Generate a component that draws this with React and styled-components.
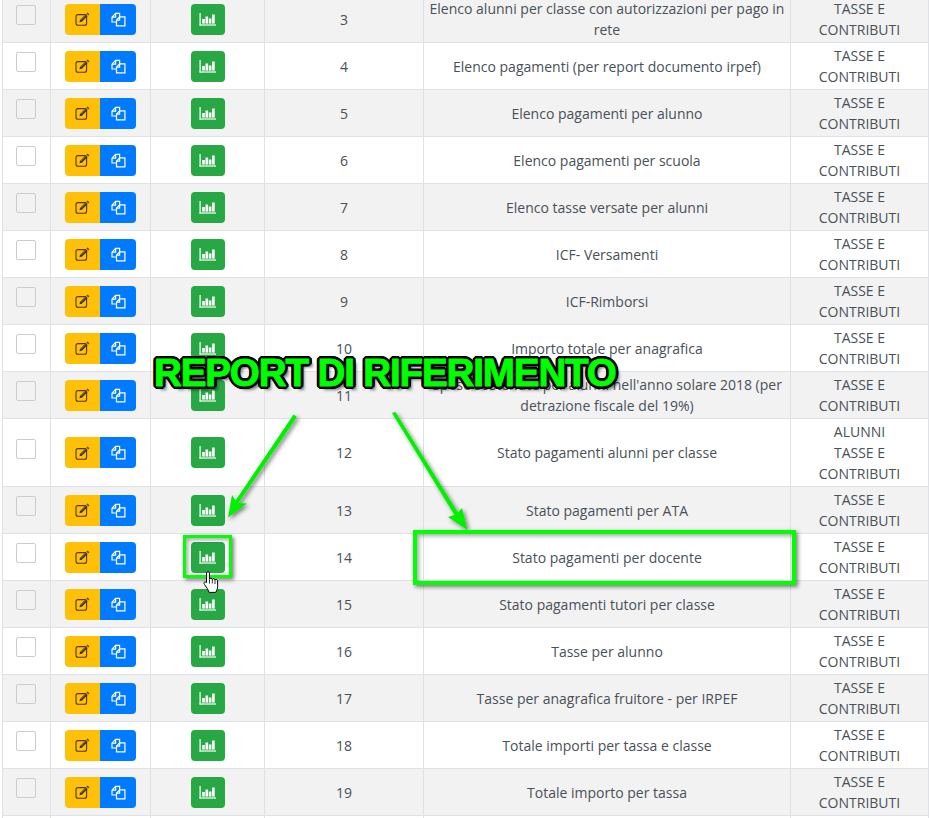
import React from "react";
import styled, { createGlobalStyle } from "styled-components";

const Global = createGlobalStyle`
  html, body { margin: 0; padding: 0; background: #fff; }
  body { font-family: "Open Sans", "Liberation Sans", sans-serif; }
`;

const Viewport = styled.div`
  position: relative;
  width: 929px;
  height: 818px;
  overflow: hidden;
`;

const Table = styled.table`
  width: 927px;
  margin: -5px 0 0 2px;
  table-layout: fixed;
  border-collapse: collapse;
  font-size: 14px;
  line-height: 21px;
  color: #495057;
  text-align: center;
`;

const Row = styled.tr`
  background: ${(p) => (p.$striped ? "#f2f2f2" : "#fff")};
`;

const Cell = styled.td`
  border: 1px solid #dee2e6;
  padding: 2px 4px;
  height: 42px;
  vertical-align: middle;
`;

const Checkbox = styled.span`
  display: block;
  box-sizing: border-box;
  width: 20px;
  height: 20px;
  margin: -8px 0 0 9px;
  background: ${(p) => (p.$striped ? "#f2f2f2" : "#fff")};
  border: 1px solid #ccc;
  border-radius: 2px;
`;

const ButtonGroup = styled.div`
  display: inline-flex;
  vertical-align: middle;
`;

const Button = styled.span`
  display: flex;
  align-items: center;
  justify-content: center;
  height: 31px;
  width: ${(p) => p.$w}px;
  background: ${(p) => p.$bg};
  border-radius: ${(p) => p.$radius};
`;

const Title = styled.div`
  padding: 0 1px;
`;

const Overlay = styled.svg`
  position: absolute;
  left: 0;
  top: 0;
  pointer-events: none;
`;

const Headline = styled.div`
  position: absolute;
  left: 154px;
  top: 349px;
  font-family: "Liberation Sans", Arial, sans-serif;
  font-weight: 700;
  font-size: 38.6px;
  letter-spacing: -1.15px;
  line-height: 48px;
  white-space: nowrap;
  color: #00ff00;
  -webkit-text-stroke: 0.9px #00ff00;
  text-shadow:
    -3px 0 0 #000, 3px 0 0 #000, 0 -3px 0 #000, 0 3px 0 #000,
    -2px -2px 0 #000, 2px -2px 0 #000, -2px 2px 0 #000, 2px 2px 0 #000,
    -3px -1px 0 #000, 3px -1px 0 #000, -3px 1px 0 #000, 3px 1px 0 #000,
    -1px -3px 0 #000, 1px -3px 0 #000, -1px 3px 0 #000, 1px 3px 0 #000,
    4px 4px 3px rgba(0, 0, 0, 0.5);
`;

const Marker = styled.div`
  position: absolute;
  box-sizing: border-box;
  left: ${(p) => p.$x}px;
  top: ${(p) => p.$y}px;
  width: ${(p) => p.$w}px;
  height: ${(p) => p.$h}px;
  border: ${(p) => p.$t}px solid #00ff00;
  box-shadow: 2px 2px 4px rgba(0, 0, 0, 0.5), inset 2px 2px 4px rgba(0, 0, 0, 0.35);
`;

const Cursor = styled.svg`
  position: absolute;
  left: 203px;
  top: 571px;
`;

const EditIcon = () => (
  <svg width="15" height="14" viewBox="0 0 15 14" fill="none">
    <rect x="1" y="2.600" width="10.600" height="10.600" rx="2" stroke="#5a3010" strokeWidth="1.100" />
    <path d="M5 8 10.800 2.200l1.800 1.800-5.800 5.800-2.300.5z" fill="#3a3320" />
    <path d="M6.200 8 11 3.200" stroke="#a88a20" strokeWidth="0.700" />
    <path d="M11.400 1.600 12.600.5l1.800 1.800-1.100 1.200z" fill="#6a4a10" />
  </svg>
);

const FilesIcon = () => (
  <svg width="15" height="15" viewBox="0 0 15 15" fill="none" stroke="#fff" strokeWidth="1.200">
    <path d="M5.500 10H1V5.200L4.600 1.300H8.600V4.800" />
    <path d="M4.600 1.300V5.200H1" />
    <path d="M8.600 4.800H13.900V13.900H5.500V8.200z" />
    <path d="M8.600 4.800V8.200H5.500" />
  </svg>
);

const ChartIcon = () => (
  <svg width="17" height="13" viewBox="0 0 17 13" fill="#fff">
    <rect x="0.500" y="0" width="1.200" height="12.500" />
    <rect x="0.500" y="11.400" width="16.500" height="1.200" />
    <rect x="3.200" y="6" width="2.600" height="4.600" />
    <rect x="6.500" y="3.500" width="2.600" height="7.100" />
    <rect x="9.800" y="5.500" width="2.600" height="5.100" />
    <rect x="13.100" y="1.500" width="2.600" height="9.100" />
  </svg>
);

const TC = "TASSE E CONTRIBUTI";
const rows = [
  [3, "Elenco alunni per classe con autorizzazioni per pago in rete"],
  [4, "Elenco pagamenti (per report documento irpef)"],
  [5, "Elenco pagamenti per alunno"],
  [6, "Elenco pagamenti per scuola"],
  [7, "Elenco tasse versate per alunni"],
  [8, "ICF- Versamenti"],
  [9, "ICF-Rimborsi"],
  [10, "Importo totale per anagrafica"],
  [11, "Spese sostenute per alunni nell'anno solare 2018 (per detrazione fiscale del 19%)"],
  [12, "Stato pagamenti alunni per classe", true],
  [13, "Stato pagamenti per ATA"],
  [14, "Stato pagamenti per docente"],
  [15, "Stato pagamenti tutori per classe"],
  [16, "Tasse per alunno"],
  [17, "Tasse per anagrafica fruitore - per IRPEF"],
  [18, "Totale importi per tassa e classe"],
  [19, "Totale importo per tassa"],
];

export default function App() {
  return (
    <Viewport>
      <Global />
      <Table>
        <colgroup>
          <col style={{ width: 48 }} />
          <col style={{ width: 100 }} />
          <col style={{ width: 114 }} />
          <col style={{ width: 159 }} />
          <col style={{ width: 367 }} />
          <col />
        </colgroup>
        <tbody>
          {rows.map(([n, title, alunni], i) => {
            const striped = i % 2 === 0;
            return (
              <Row key={n} $striped={striped}>
                <Cell><Checkbox $striped={striped} /></Cell>
                <Cell>
                  <ButtonGroup>
                    <Button $w={35} $bg="#ffc107" $radius="4px 0 0 4px"><EditIcon /></Button>
                    <Button $w={36} $bg="#007bff" $radius="0 4px 4px 0"><FilesIcon /></Button>
                  </ButtonGroup>
                </Cell>
                <Cell>
                  <ButtonGroup>
                    <Button $w={34} $bg="#28a745" $radius="4px"><ChartIcon /></Button>
                  </ButtonGroup>
                </Cell>
                <Cell>{n}</Cell>
                <Cell><Title>{title}</Title></Cell>
                <Cell>
                  {alunni && <div>ALUNNI</div>}
                  {TC}
                </Cell>
              </Row>
            );
          })}
          <Row>
            <Cell /><Cell /><Cell /><Cell /><Cell /><Cell />
          </Row>
        </tbody>
      </Table>

      <Overlay width="929" height="818" viewBox="0 0 929 818">
        <defs>
          <filter id="arrowShadow" x="-30%" y="-30%" width="160%" height="160%">
            <feDropShadow dx="2" dy="2" stdDeviation="2" floodColor="#000" floodOpacity="0.5" />
          </filter>
        </defs>
        <g filter="url(#arrowShadow)" fill="#00f000" stroke="none">
          <path d="M293.500 414.500 L297 417 L238.500 503 L247 503.500 L228 517.500 L232 495 L235.500 500.500 Z" />
          <path d="M392 413 L395.500 412 L458 512.500 L462 508 L467.500 530 L448 517 L454.500 515 Z" />
        </g>
      </Overlay>

      <Marker $x={183} $y={535} $w={49} $h={43} $t={3} />
      <Marker $x={413} $y={530} $w={383} $h={55} $t={4} />

      <Cursor width="18" height="24" viewBox="0 0 18 24">
        <path d="M3.500 2.200c0-2 3-2 3 0v6c.4-1.500 2.600-1.300 2.800.3.4-1.200 2.400-1 2.600.5.5-1 2.500-.7 2.600.9l.2 5c0 3-1 4.500-2 6.500H6.200C5 18.500 3.500 16 1.500 13.500.2 11.800 1.500 10 3.500 11.500z" fill="#fff" stroke="#000" strokeWidth="1" strokeLinejoin="round" />
        <path d="M6.500 8.500v4M9.300 8.500v4M12 9v4" stroke="#000" strokeWidth="0.8" />
      </Cursor>

      <Headline>REPORT DI RIFERIMENTO</Headline>
    </Viewport>
  );
}
